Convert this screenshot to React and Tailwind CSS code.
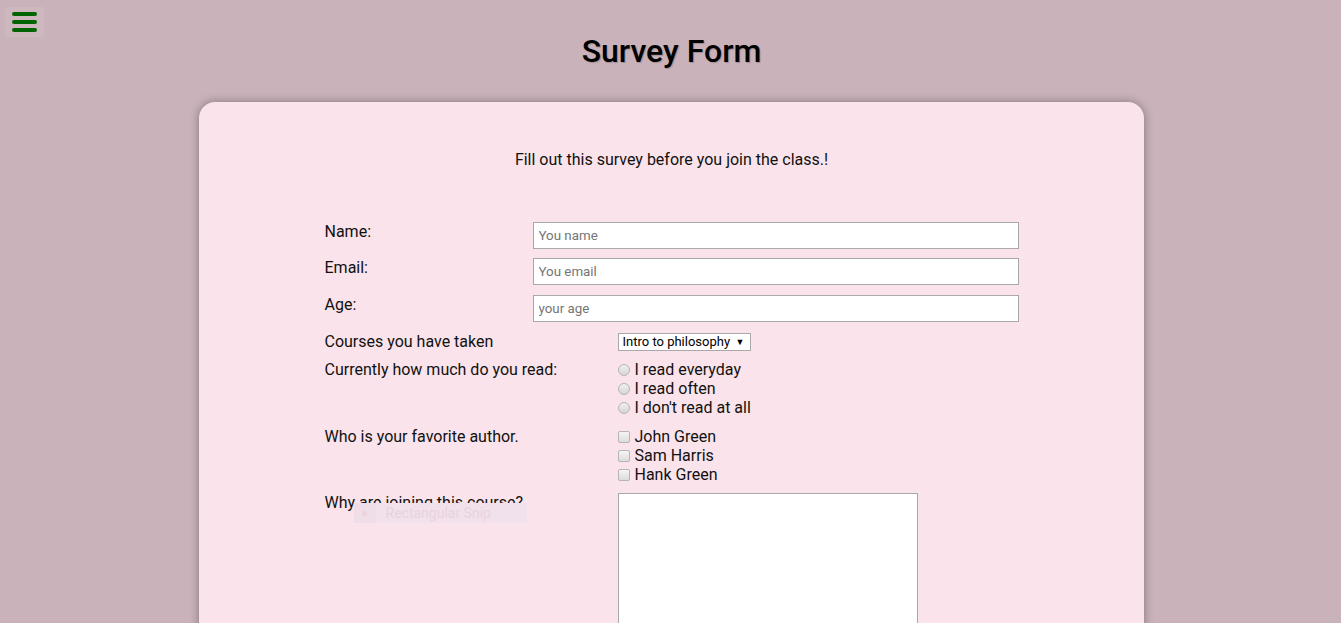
import React from "react";

function Radio({ label }) {
  return (
    <label className="flex items-center h-[19px]">
      <span className="w-[12px] h-[12px] rounded-full border border-[#b5b5b5] bg-gradient-to-b from-[#f0f0f0] to-[#d6d6d6] mr-[5px] shrink-0" />
      <span>{label}</span>
    </label>
  );
}

function Check({ label }) {
  return (
    <label className="flex items-center h-[19px]">
      <span className="w-[12px] h-[12px] rounded-[2px] border border-[#b5b5b5] bg-gradient-to-b from-[#f5f5f5] to-[#dcdcdc] mr-[5px] shrink-0" />
      <span>{label}</span>
    </label>
  );
}

export default function App() {
  return (
    <div className="min-h-[623px] bg-[#c9b2b9] font-['Roboto',sans-serif] text-[#111] relative overflow-hidden">
      <div className="absolute left-[5px] top-[7px] w-[39px] h-[30px] bg-[#cdb8be] flex flex-col items-center justify-center gap-[4px]">
        <span className="block w-[25px] h-[4px] rounded-full bg-[#006400]" />
        <span className="block w-[25px] h-[4px] rounded-full bg-[#006400]" />
        <span className="block w-[25px] h-[4px] rounded-full bg-[#006400]" />
      </div>

      <h1 className="pt-[32px] pl-[2px] text-center text-[32px] leading-[38px] font-medium text-black [text-shadow:1px_1px_1px_rgba(0,0,0,0.2)]">
        Survey Form
      </h1>

      <div className="mt-[32px] ml-[199px] w-[945px] rounded-[16px] bg-[#fae3ea] shadow-[0_0_10px_rgba(0,0,0,0.35)] pb-[40px]">
        <p className="pt-[48px] text-center text-[16px] leading-[19px]">
          Fill out this survey before you join the class.!
        </p>

        <form className="relative mx-auto w-[694px] mt-[53px] text-[16px] leading-[19px]">
          <div className="flex items-start mb-[9px]">
            <label className="w-[208px]">Name:</label>
            <input
              className="flex-1 h-[27px] border border-[#a9a9a9] bg-white px-[5px] text-[13.33px] text-[#333] placeholder:text-[#757575] outline-none"
              placeholder="You name"
            />
          </div>
          <div className="flex items-start mb-[10px]">
            <label className="w-[208px]">Email:</label>
            <input
              className="flex-1 h-[27px] border border-[#a9a9a9] bg-white px-[5px] text-[13.33px] text-[#333] placeholder:text-[#757575] outline-none"
              placeholder="You email"
            />
          </div>
          <div className="flex items-start mb-[10px]">
            <label className="w-[208px]">Age:</label>
            <input
              className="flex-1 h-[27px] border border-[#a9a9a9] bg-white px-[5px] text-[13.33px] text-[#333] placeholder:text-[#757575] outline-none"
              placeholder="your age"
            />
          </div>

          <div className="flex items-center mb-[9px]">
            <label className="w-[293px]">Courses you have taken</label>
            <div className="relative h-[18px] w-[133px] border border-[#a9a9a9] bg-white text-[13px] leading-[16px] pl-[4px] text-black flex items-center">
              <span>Intro to philosophy</span>
              <span className="absolute right-[5px] top-[1px] text-[9px] leading-[14px]">▼</span>
            </div>
          </div>

          <div className="flex items-start mb-[10px]">
            <label className="w-[293px]">Currently how much do you read:</label>
            <div className="flex flex-col">
              <Radio label="I read everyday" />
              <Radio label="I read often" />
              <Radio label="I don't read at all" />
            </div>
          </div>

          <div className="flex items-start mb-[9px]">
            <label className="w-[293px]">Who is your favorite author.</label>
            <div className="flex flex-col">
              <Check label="John Green" />
              <Check label="Sam Harris" />
              <Check label="Hank Green" />
            </div>
          </div>

          <div className="flex items-start">
            <label className="w-[293px]">Why are joining this course?</label>
            <textarea className="w-[300px] h-[200px] border border-[#a9a9a9] bg-white resize-none outline-none" />
          </div>

          <div className="absolute left-[29px] top-[281px] w-[173px] h-[20px] bg-[#f0e1ec] flex items-center text-[14px] text-[#ead2dc]">
            <span className="w-[22px] h-full bg-[#efdde8] flex items-center justify-center">
              <span className="w-[5px] h-[5px] rounded-full bg-[#ecd3dc]" />
            </span>
            <span className="ml-[10px]">Rectangular Snip</span>
          </div>
        </form>
      </div>
    </div>
  );
}
